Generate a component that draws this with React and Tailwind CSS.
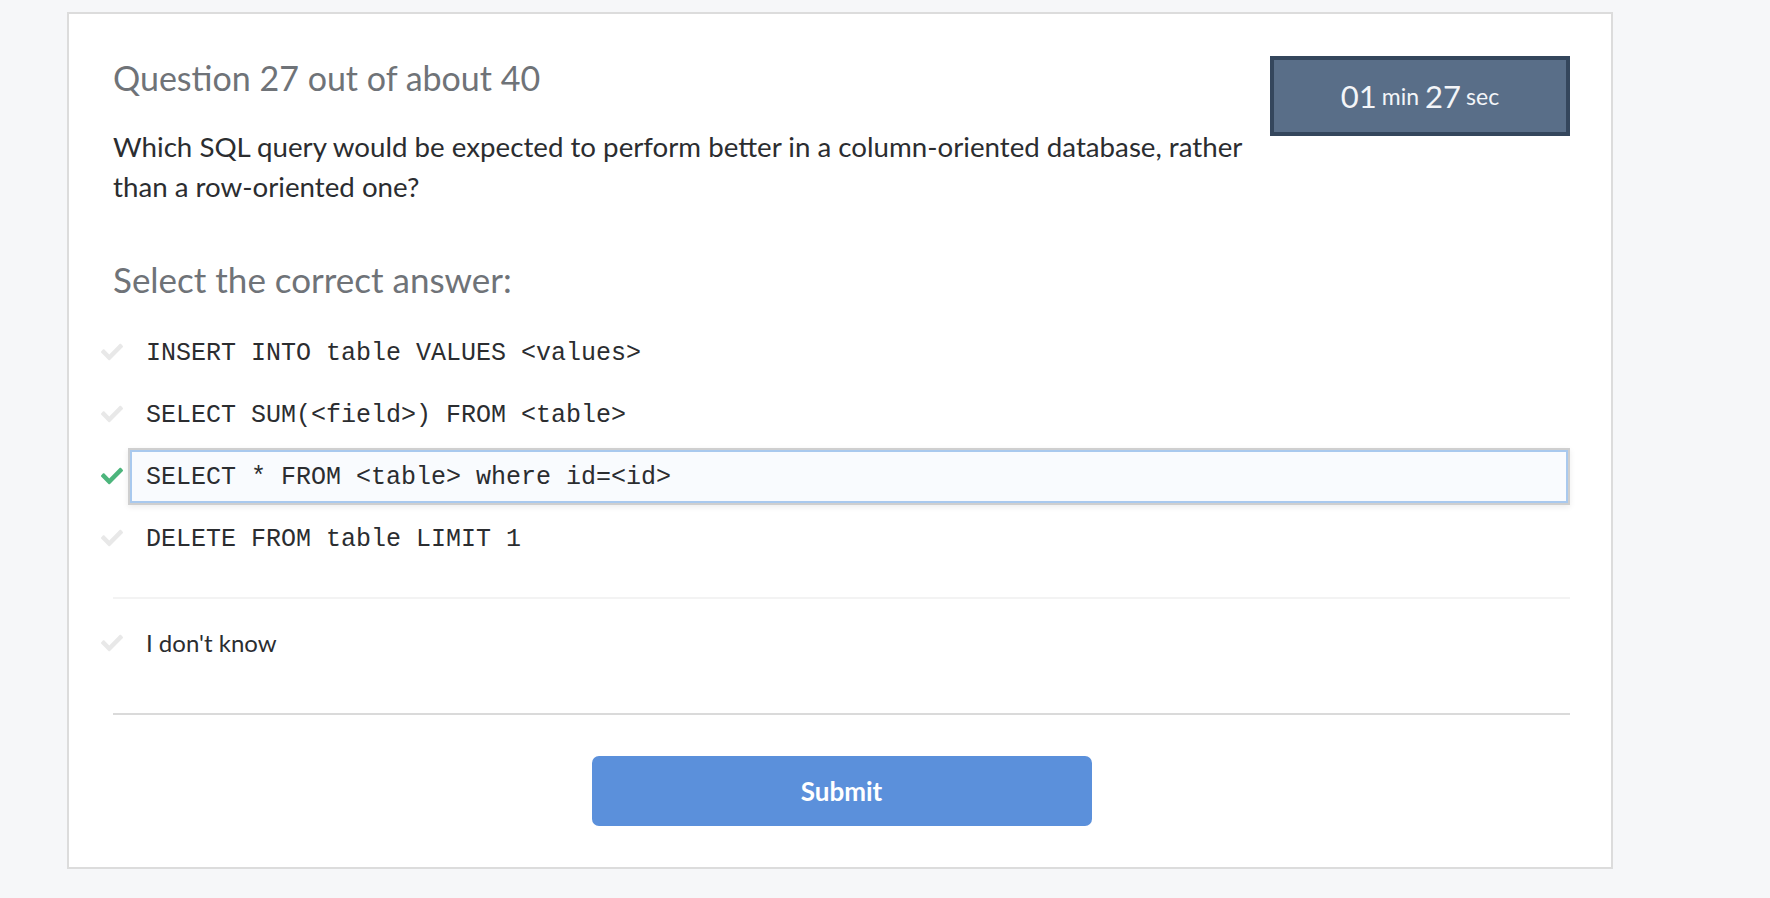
import { FaCheck } from 'react-icons/fa';

const options = [
  "INSERT INTO table VALUES <values>",
  "SELECT SUM(<field>) FROM <table>",
  "SELECT * FROM <table> where id=<id>",
  "DELETE FROM table LIMIT 1",
];

function App() {
  const selected = 2;

  return (
    <div className="min-h-screen w-full bg-[#f6f7f9] pl-[67px] pt-[12px] font-['Lato','Noto_Sans',sans-serif]">
      <div className="w-[1546px] h-[857px] bg-white border-2 border-[#dcdcdc] pl-[44px] pr-[41px] pt-[42px]">
        <div className="flex justify-between items-start">
          <div>
            <h1 className="text-[34px] leading-[44px] text-[#6f7378]">Question 27 out of about 40</h1>
            <p className="mt-[27px] w-[1150px] text-[27.7px] leading-[40px] text-[#2b2d30]">
              Which SQL query would be expected to perform better in a column-oriented database, rather than a row-oriented one?
            </p>
          </div>
          <div className="w-[300px] h-[80px] shrink-0 bg-[#596e88] border-4 border-[#34465c] flex items-center justify-center text-[#f3f5f8]">
            <span className="text-[31px]">01</span>
            <span className="text-[23px] ml-[5px]">min</span>
            <span className="text-[31px] ml-[6px]">27</span>
            <span className="text-[23px] ml-[5px]">sec</span>
          </div>
        </div>

        <h2 className="mt-[52px] text-[35px] leading-[40px] text-[#6f7378]">Select the correct answer:</h2>

        <div className="mt-[22px] ml-[-12px]">
          {options.map((opt, i) => (
            <div key={i} className="h-[62px] flex items-center">
              <FaCheck className={`w-[22px] h-[22px] shrink-0 ${i === selected ? "text-[#4cb57c]" : "text-[#e8e8e8]"}`} />
              <div
                className={`ml-[5px] flex-1 h-[57px] flex items-center pl-[14px] pt-[3px] font-['Liberation_Mono',monospace] text-[25px] text-[#2b2d30] ${
                  i === selected
                    ? "border-2 border-[#cfcfcf] outline-2 outline-[#a9c9ee] -outline-offset-4 bg-[#f9fbfe] shadow-[0_2px_6px_rgba(0,0,0,0.08)]"
                    : "border-2 border-transparent"
                }`}
              >
                <span className="ml-[2px]">{opt}</span>
              </div>
            </div>
          ))}
        </div>

        <div className="mt-[28px] h-[2px] bg-[#f3f3f3]" />

        <div className="mt-[13px] ml-[-12px] h-[62px] flex items-center">
          <FaCheck className="w-[22px] h-[22px] shrink-0 text-[#e8e8e8]" />
          <span className="ml-[23px] text-[24px] text-[#2b2d30]">I don't know</span>
        </div>

        <div className="mt-[39px] h-[2px] bg-[#dadada]" />

        <div className="mt-[41px] flex justify-center">
          <button
            type="button"
            className="w-[500px] h-[70px] rounded-[7px] bg-[#5b90db] text-white text-[26px] font-bold"
          >
            Submit
          </button>
        </div>
      </div>
    </div>
  );
}

export default App;
